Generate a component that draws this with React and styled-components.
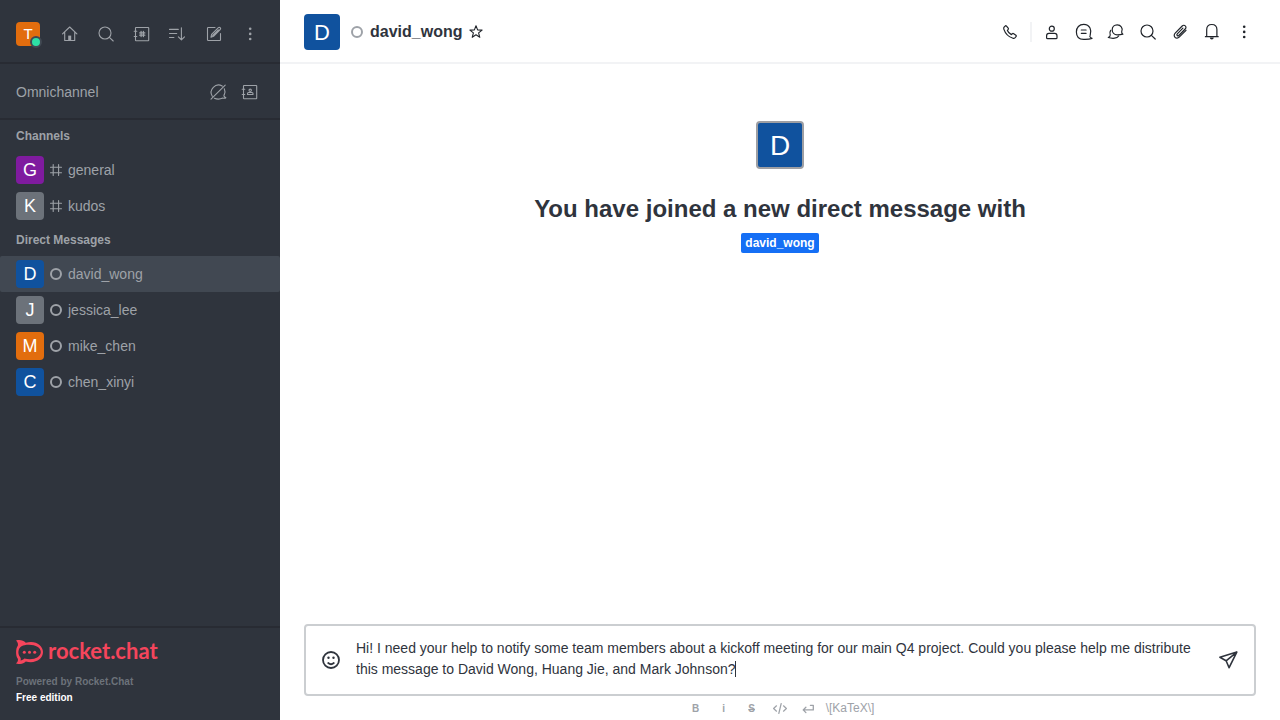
import React, { useEffect, useRef, useState } from 'react';
import styled, { createGlobalStyle } from 'styled-components';

const GlobalStyle = createGlobalStyle`
  *, *::before, *::after { box-sizing: border-box; }
  body {
    margin: 0;
    font-family: "Liberation Sans", Arial, sans-serif;
    font-size: 14px;
    line-height: 20px;
    color: #2f343d;
    background: #fff;
  }
  button, textarea { font: inherit; color: inherit; }
  h1, h2, h3, p, ul { margin: 0; padding: 0; }
  ul { list-style: none; }
`;

const Shell = styled.div`
  display: flex;
  height: 100vh;
`;

const Sidebar = styled.nav`
  display: flex;
  flex-direction: column;
  flex: 0 0 280px;
  background: #2f343d;
  color: #9ea2a8;
`;

const TopBar = styled.div`
  display: flex;
  align-items: center;
  justify-content: space-between;
  padding: 20px 16px 14px;
  border-bottom: 2px solid #282b33;
`;

const Omnichannel = styled.section`
  display: flex;
  align-items: center;
  justify-content: space-between;
  padding: 14px 16px 12px;
  border-bottom: 2px solid #282b33;
`;

const OmniTitle = styled.h2`
  font-size: 14px;
  font-weight: 400;
`;

const Group = styled.div`
  display: flex;
  align-items: center;
  gap: ${(p) => p.$gap ?? 4}px;
`;

const IconButton = styled.button`
  display: flex;
  align-items: center;
  justify-content: center;
  width: ${(p) => p.$width ?? 28}px;
  height: ${(p) => p.$height ?? 28}px;
  padding: 0;
  border: 0;
  border-radius: 4px;
  background: none;
  cursor: pointer;
`;

const Svg = styled.svg`
  display: block;
  flex: none;
  fill: none;
  stroke: currentColor;
  stroke-width: ${(p) => p.$stroke ?? 1.1};
  stroke-linecap: round;
  stroke-linejoin: round;

  .solid { fill: currentColor; stroke: none; }
`;

const avatarText = { 24: 15, 28: 18, 36: 22, 48: 28 };

const Avatar = styled.span`
  display: flex;
  flex: none;
  align-items: center;
  justify-content: center;
  width: ${(p) => p.$size}px;
  height: ${(p) => p.$size}px;
  padding-top: ${(p) => (p.$size > 28 ? 2 : 0)}px;
  border: ${(p) => (p.$framed ? '2px solid #9e9fa3' : '0')};
  border-radius: 4px;
  background: ${(p) => p.$color};
  color: #fff;
  font-size: ${(p) => avatarText[p.$size]}px;
`;

const Profile = styled.button`
  position: relative;
  padding: 0;
  border: 0;
  background: none;
  cursor: pointer;
`;

const Presence = styled.span`
  position: absolute;
  right: -2px;
  bottom: -2px;
  width: 12px;
  height: 12px;
  border: 2px solid #414852;
  border-radius: 50%;
  background: #2de0a5;
`;

const Rooms = styled.div`
  flex: 1;
  min-height: 0;
  overflow: auto;
`;

const RoomsTitle = styled.h3`
  padding: 6px 16px;
  font-size: 12px;
  line-height: 20px;
`;

const Room = styled.a`
  display: flex;
  align-items: center;
  gap: 4px;
  padding: 4px 16px;
  border-radius: 2px;
  background: ${(p) => (p.$selected ? '#414852' : 'none')};
  color: inherit;
  text-decoration: none;
`;

const StatusBox = styled.span`
  display: flex;
  align-items: center;
  justify-content: center;
  width: ${(p) => p.$width}px;
  height: 16px;
  color: #9ea2a8;
`;

const Ring = styled.span`
  width: 12px;
  height: 12px;
  border: 2px solid #9ea2a8;
  border-radius: 50%;
`;

const Footer = styled.footer`
  padding: 12px 16px 14px;
  border-top: 2px solid #282b33;
  font-size: 10px;
  font-weight: 700;
  line-height: 16px;
`;

const Logo = styled.a`
  display: flex;
  align-items: flex-start;
  gap: 5px;
  height: 24px;
  margin-bottom: 10px;
  color: #f5455c;
  font-family: Lato, sans-serif;
  font-size: 22px;
  font-weight: 700;
  line-height: 22px;
  text-decoration: none;
`;

const Powered = styled.p`
  color: #6c727a;
`;

const Edition = styled.p`
  color: #fff;
`;

const Main = styled.main`
  display: flex;
  flex: 1;
  flex-direction: column;
  min-width: 0;
`;

const Header = styled.header`
  display: flex;
  align-items: center;
  justify-content: space-between;
  padding: 14px 22px 12px 24px;
  border-bottom: 2px solid #f2f3f5;
`;

const RoomHeading = styled.div`
  display: flex;
  align-items: center;
  gap: 4px;
`;

const HeaderAvatar = styled.div`
  padding-right: 4px;
`;

const RoomName = styled.h1`
  font-size: 16px;
  line-height: 24px;
`;

const HeaderButton = styled(IconButton)`
  color: #1f2329;
`;

const Divider = styled.span`
  width: 2px;
  height: 20px;
  margin: 0 2px;
  background: #f2f3f5;
`;

const Conversation = styled.section`
  display: flex;
  flex: 1;
  flex-direction: column;
  align-items: center;
  padding: 57px 24px 0;
`;

const Welcome = styled.h2`
  margin: 24px 0 8px;
  font-size: 24px;
  line-height: 32px;
  text-align: center;
`;

const UserTag = styled.a`
  padding: 0 4px;
  border-radius: 2px;
  background: #156ff5;
  color: #fff;
  font-size: 12px;
  font-weight: 700;
  line-height: 20px;
  text-decoration: none;
`;

const Composer = styled.form`
  padding: 0 24px;
`;

const Box = styled.div`
  display: flex;
  align-items: center;
  padding: 0 12px 0 11px;
  border: 2px solid #cbced1;
  border-radius: 4px;
`;

const FieldArea = styled.div`
  position: relative;
  display: flex;
  flex: 1;
  min-width: 0;
  margin: 0 8px 0 11px;
`;

const MessageField = styled.textarea`
  flex: 1;
  height: 68px;
  min-width: 0;
  padding: 12px 0;
  border: 0;
  outline: 0;
  background: none;
  caret-color: transparent;
  line-height: 21px;
  resize: none;
`;

const CaretLayer = styled.div`
  position: absolute;
  inset: 0;
  padding: 12px 0;
  line-height: 21px;
  overflow-wrap: break-word;
  white-space: pre-wrap;
  visibility: hidden;
  pointer-events: none;
`;

const Caret = styled.span`
  display: inline-block;
  width: 1px;
  height: 16px;
  margin: 0 0 0 -1px;
  background: #2f343d;
  vertical-align: text-bottom;
  visibility: visible;
`;

const FormatBar = styled.div`
  display: flex;
  justify-content: center;
  height: 24px;
  color: #9ea2a8;
`;

const FormatButton = styled(IconButton)`
  padding-top: 1px;
  font-size: 10px;
  font-weight: 700;
  text-decoration: ${(p) => (p.$strike ? 'line-through' : 'none')};
`;

const KatexLink = styled.a`
  padding: 0 4px;
  color: inherit;
  font-size: 12px;
  line-height: 24px;
  text-decoration: none;
`;

const bookFrame = (
  <>
    <rect x="3.500" y="3.500" width="13.200" height="13.200" rx="0.500" />
    <path d="M2.200 7.300h2.600M2.200 12.500h2.600" />
  </>
);

const dots = (
  <g className="solid">
    <circle cx="10.200" cy="4.800" r="1.300" />
    <circle cx="10.200" cy="9.900" r="1.300" />
    <circle cx="10.200" cy="15" r="1.300" />
  </g>
);

const shapes = {
  home: (
    <>
      <path d="M2.5 9.8 9.7 3l7.2 6.8M4.7 8.2v8.3h10V8.2" />
      <path className="solid" d="M8.2 11.6h3v5h-3z" />
    </>
  ),
  search: (
    <>
      <circle cx="9" cy="9" r="6" />
      <path d="m13.400 13.400 3.800 3.600" />
    </>
  ),
  directory: (
    <>
      {bookFrame}
      <path strokeWidth="1.300" d="M9.100 7.500v5M11.400 7.500v5M7.700 8.900h5.100M7.700 11.200h5.100" />
    </>
  ),
  sort: <path d="M1.500 5.400h8.800M1.500 9.500h7.200M1.500 13.500h4.400M13.400 3.800v12M10.400 12.800l3 3.100 3.100-3.100" />,
  edit: (
    <>
      <path d="M11 3.500H4.200a.7.7 0 0 0-.7.7v11.600c0 .4.3.7.7.7h11.600c.4 0 .7-.3.7-.7V9.500" />
      <path d="m7 13.200.6-2.800 6.800-6.700c.5-.5 1.300-.5 1.800 0s.5 1.300 0 1.800l-6.700 6.800zM8.700 11.500l5.600-5.600" />
    </>
  ),
  kebab: dots,
  omniOff: (
    <path d="M14.200 4.100A7.300 7.300 0 0 0 4.300 14.200M16.300 6.700c.7 1.600.8 4 .1 5.700-.3.500-.7.800-.4 1.600.3.900 1 1.400 1.900 1.700-.6.800-1.900.7-3.100.4-2.700 1.300-5.900 1.300-8.400.2M3 17.200 17.200 3.200" />
  ),
  contacts: (
    <>
      {bookFrame}
      <circle cx="10.200" cy="8.300" r="1.200" />
      <path d="M7.500 12.500v-1c0-.6.4-1 1-1H12c.6 0 1 .4 1 1v1z" />
    </>
  ),
  hash: <path d="M7.200 4.500v11M12.600 4.500v11M4.500 7.300h11M4.500 12.700h11" />,
  phone: (
    <path d="m4.1 5.200 1-1.100c.4-.4 1-.4 1.400 0l1.700 2.100c.3.400.3 1-.1 1.400l-.7.8c.8 1.900 2.100 3.200 4 4.200l.9-.8c.4-.4.9-.4 1.400-.1l2.200 1.600c.5.400.5 1 .1 1.400l-1.100 1.200c-.5.500-1.200.6-1.900.4C8.600 14.900 5.300 11.500 3.800 7.100c-.2-.7-.1-1.400.3-1.900z" />
  ),
  user: (
    <>
      <circle cx="9.800" cy="6.700" r="2.500" />
      <path d="M4.600 15.700v-2c0-1.500 1-2.300 2.300-2.300h5.800c1.300 0 2.300.8 2.300 2.300v2c0 .6-.4 1-1 1H5.600c-.6 0-1-.4-1-1z" />
    </>
  ),
  thread: (
    <path d="M16.200 13.200c.7-2 .9-4.900-.2-7.100-1.200-2.400-3.300-3.700-6.300-3.700-4.500 0-7.300 3.100-7.300 7.500 0 4.500 2.800 7.400 7.300 7.500 3 .1 6.200-.2 8.300-1-1.200-.6-1.900-1.100-2.100-1.800-.1-.5.100-.9.300-1.400zM7.300 8h4.800M7.300 11.300h4.800" />
  ),
  discussion: (
    <>
      <path d="M15.700 9.700c.7-1.600.7-3.500-.4-4.900-.9-1.300-2.300-2-4.100-2-2.900 0-5 2.200-5 5s2.100 5 5 5c1.900 0 4-.1 5.700-.6-.9-.6-1.500-1.200-1.200-2.500z" />
      <path d="M4.700 8.300c-1 1.400-1.100 3-.5 4.500.3 1.100-.4 1.900-1.900 2.700 2.100.7 4.500.9 6.300.7 1.900-.2 3.300-1 4.100-2.200" />
    </>
  ),
  clip: (
    <path d="m12.900 6.200-5.600 5.700c-.5.500-.5 1.200-.1 1.600.5.500 1.200.4 1.600 0l6.400-6.500c1-1 1-2.300.1-3.100-.9-.9-2.200-.8-3.100.1l-7 7.100c-1.300 1.300-1.300 3.100-.2 4.200 1.200 1.200 3 1.100 4.200-.1l6.800-6.900" />
  ),
  bell: (
    <>
      <path d="M3.400 14.700h12.800M4.700 14.500V7.600c0-3 2-5.100 5.100-5.100s5.100 2.100 5.100 5.100v6.900" />
      <path className="solid" d="M7.800 15.400h4c-.2 1.300-.9 2-2 2s-1.800-.7-2-2z" />
    </>
  ),
  star: <path d="m10 3.700 1.600 4.200 4.500.2-3.500 2.800 1.200 4.400L10 12.800l-3.800 2.500 1.200-4.400-3.500-2.800 4.500-.2z" />,
  emoji: (
    <>
      <circle cx="10" cy="10" r="8" />
      <path d="M7.200 13c1.600 1.400 4 1.400 5.600 0" />
      <g className="solid">
        <circle cx="7.500" cy="7.700" r="1.200" />
        <circle cx="12.500" cy="7.700" r="1.200" />
      </g>
    </>
  ),
  send: <path d="M18.800 2.100 1.900 7.300l6.200 3.500 3 6.900zM8.100 10.800l10.700-8.700" />,
  code: <path d="M6.500 6.800 3.600 9.500l2.900 2.700M13.500 6.800l2.900 2.700-2.900 2.700M11.200 4.500 8.800 14.500" />,
  enter: <path d="M12.400 6.300h2.900v4.600H5.200M7.900 8.200l-2.700 2.700 2.700 2.700" />,
};

function Icon({ name, stroke }) {
  return (
    <Svg width="20" height="20" viewBox="0 0 20 20" $stroke={stroke} aria-hidden="true">
      {shapes[name]}
    </Svg>
  );
}

function LogoMark() {
  return (
    <Svg width="27" height="24" viewBox="0 0 27 24" aria-hidden="true">
      <path
        className="solid"
        fillRule="evenodd"
        d="M0 .5C3.800-.6 7.300.3 9.800 2.700 19-.1 27 4.800 27 12.100c0 7.200-8 12-17.200 9.400C7.400 23.900 3.700 24.600 0 23.600c1.700-1.600 2.300-3.200 1.800-4.900C-.5 16-.5 8.500 1.800 5.700 2.300 3.800 1.700 2.100 0 .5zM4.300 7.200C1.800 9.900 1.800 14.300 4.100 17c.9 1 .9 2.300.4 3.600 1.400-.2 2.900-1 3.900-2 8.800 2.300 16.400-1.300 16.400-6.500S17.200 3.600 8.400 5.300C6.800 5.600 5.300 6.200 4.300 7.200z"
      />
      <g className="solid">
        <circle cx="8.300" cy="12.200" r="1.500" />
        <circle cx="13.500" cy="12.200" r="1.500" />
        <circle cx="18.700" cy="12.200" r="1.500" />
      </g>
    </Svg>
  );
}

const navActions = [
  ['home', 'Home'],
  ['search', 'Search'],
  ['directory', 'Directory'],
  ['sort', 'Display'],
  ['edit', 'Create new'],
  ['kebab', 'Administration'],
];

const roomActions = [
  ['user', 'User info'],
  ['thread', 'Threads'],
  ['discussion', 'Discussions'],
  ['search', 'Search messages'],
  ['clip', 'Files'],
  ['bell', 'Notifications'],
  ['kebab', 'Options'],
];

const channels = [
  { name: 'general', color: '#7f1b9f' },
  { name: 'kudos', color: '#6c727a' },
];

const directMessages = [
  { name: 'david_wong', color: '#10529e', selected: true },
  { name: 'jessica_lee', color: '#6c727a' },
  { name: 'mike_chen', color: '#e26d0e' },
  { name: 'chen_xinyi', color: '#10529e' },
];

const draft =
  'Hi! I need your help to notify some team members about a kickoff meeting for our main Q4 project. Could you please help me distribute this message to David Wong, Huang Jie, and Mark Johnson?';

function RoomList({ title, rooms, marker }) {
  return (
    <section>
      <RoomsTitle>{title}</RoomsTitle>
      <ul>
        {rooms.map((room) => (
          <li key={room.name}>
            <Room
              href={`#${room.name}`}
              $selected={room.selected}
              aria-current={room.selected ? 'page' : undefined}
            >
              <Avatar $size={28} $color={room.color} aria-hidden="true">
                {room.name[0].toUpperCase()}
              </Avatar>
              <StatusBox $width={16}>{marker}</StatusBox>
              {room.name}
            </Room>
          </li>
        ))}
      </ul>
    </section>
  );
}

export default function App() {
  const [message, setMessage] = useState(draft);
  const [caretAt, setCaretAt] = useState(draft.length);
  const field = useRef(null);

  useEffect(() => {
    field.current.focus();
    field.current.setSelectionRange(draft.length, draft.length);
  }, []);

  return (
    <>
      <GlobalStyle />
      <Shell>
        <Sidebar aria-label="Rooms">
          <TopBar>
            <Profile type="button" aria-label="User menu">
              <Avatar $size={24} $color="#e26d0e">T</Avatar>
              <Presence />
            </Profile>
            <Group $gap={8}>
              {navActions.map(([name, label]) => (
                <IconButton key={name} type="button" aria-label={label}>
                  <Icon name={name} />
                </IconButton>
              ))}
            </Group>
          </TopBar>
          <Omnichannel>
            <OmniTitle>Omnichannel</OmniTitle>
            <Group>
              <IconButton type="button" aria-label="Turn on answer chats">
                <Icon name="omniOff" />
              </IconButton>
              <IconButton type="button" aria-label="Contact center">
                <Icon name="contacts" />
              </IconButton>
            </Group>
          </Omnichannel>
          <Rooms>
            <RoomList title="Channels" rooms={channels} marker={<Icon name="hash" />} />
            <RoomList title="Direct Messages" rooms={directMessages} marker={<Ring />} />
          </Rooms>
          <Footer>
            <Logo href="#home">
              <LogoMark />
              rocket.chat
            </Logo>
            <Powered>Powered by Rocket.Chat</Powered>
            <Edition>Free edition</Edition>
          </Footer>
        </Sidebar>
        <Main>
          <Header>
            <RoomHeading>
              <HeaderAvatar>
                <Avatar $size={36} $color="#10529e" aria-hidden="true">D</Avatar>
              </HeaderAvatar>
              <StatusBox $width={18}>
                <Ring />
              </StatusBox>
              <RoomName>david_wong</RoomName>
              <HeaderButton type="button" $width={20} $height={20} aria-label="Favorite">
                <Icon name="star" />
              </HeaderButton>
            </RoomHeading>
            <Group>
              <HeaderButton type="button" aria-label="Call">
                <Icon name="phone" stroke={1.2} />
              </HeaderButton>
              <Divider />
              {roomActions.map(([name, label]) => (
                <HeaderButton key={name} type="button" aria-label={label}>
                  <Icon name={name} stroke={1.2} />
                </HeaderButton>
              ))}
            </Group>
          </Header>
          <Conversation>
            <Avatar $size={48} $color="#10529e" $framed aria-hidden="true">D</Avatar>
            <Welcome>You have joined a new direct message with</Welcome>
            <UserTag href="#david_wong">david_wong</UserTag>
          </Conversation>
          <Composer onSubmit={(e) => e.preventDefault()}>
            <Box>
              <IconButton type="button" aria-label="Emoji">
                <Icon name="emoji" stroke={1.8} />
              </IconButton>
              <FieldArea>
                <MessageField
                  ref={field}
                  aria-label="Message david_wong"
                  value={message}
                  onChange={(e) => setMessage(e.target.value)}
                  onSelect={(e) => setCaretAt(e.target.selectionEnd)}
                />
                <CaretLayer aria-hidden="true">
                  {message.slice(0, caretAt)}
                  <Caret />
                </CaretLayer>
              </FieldArea>
              <IconButton type="submit" aria-label="Send">
                <Icon name="send" stroke={1.6} />
              </IconButton>
            </Box>
            <FormatBar>
              <FormatButton type="button" $height={24} aria-label="Bold">B</FormatButton>
              <FormatButton type="button" $height={24} aria-label="Italic">i</FormatButton>
              <FormatButton type="button" $height={24} $strike aria-label="Strike">S</FormatButton>
              <FormatButton type="button" $height={24} aria-label="Inline code">
                <Icon name="code" stroke={1.2} />
              </FormatButton>
              <FormatButton type="button" $height={24} aria-label="Multi line">
                <Icon name="enter" stroke={1.3} />
              </FormatButton>
              <KatexLink href="#katex">\[KaTeX\]</KatexLink>
            </FormatBar>
          </Composer>
        </Main>
      </Shell>
    </>
  );
}
